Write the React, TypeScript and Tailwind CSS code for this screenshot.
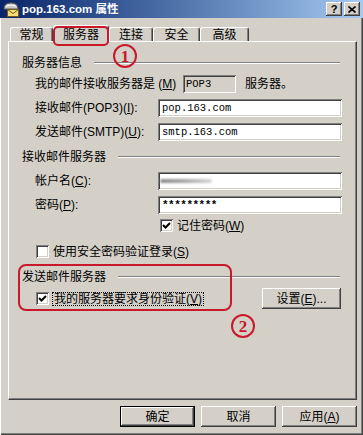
import React from 'react';

// Win2000-style dialog: pop.163.com 属性 / 服务器 tab

function MailIcon() {
  return (
    <svg width="16" height="16" viewBox="0 0 16 16">
      <path d="M1 8 Q1 2 8 2 Q15 2 15 8 Z" fill="#c8c8c8" stroke="#5a5a5a" strokeWidth="1" />
      <path d="M3 5 Q8 3 13 5" fill="none" stroke="#ffffff" strokeWidth="1" />
      <rect x="4.5" y="8.5" width="11" height="7" fill="#f6dc78" stroke="#7a5a10" strokeWidth="1" />
      <path d="M4.5 8.5 L10 12.5 L15.5 8.5" fill="none" stroke="#7a5a10" strokeWidth="1" />
    </svg>
  );
}

function CapButton({ children }: { children: React.ReactNode }) {
  return (
    <div className="w-[16px] h-[14px] bg-[#d4d0c8] flex items-center justify-center shadow-[inset_-1px_-1px_#404040,inset_1px_1px_#ffffff,inset_-2px_-2px_#808080,inset_2px_2px_#d4d0c8]">
      {children}
    </div>
  );
}

function GroupTitle({ children }: { children: React.ReactNode }) {
  return (
    <div className="h-[12px] flex items-center">
      <span className="whitespace-nowrap">{children}</span>
      <div className="flex-1 ml-[12px] mr-[2px] h-[2px] border-t border-t-[#808080] border-b border-b-white" />
    </div>
  );
}

function TextBox({ children }: { children?: React.ReactNode }) {
  return (
    <div className="flex-1 h-[18px] bg-white flex items-center pl-[4px] font-['Liberation_Mono',monospace] text-[10.5px] shadow-[inset_1px_1px_#808080,inset_-1px_-1px_#ffffff,inset_2px_2px_#404040,inset_-2px_-2px_#d4d0c8]">
      {children}
    </div>
  );
}

function CheckBox({ checked }: { checked?: boolean }) {
  return (
    <div className="w-[13px] h-[13px] shrink-0 bg-white flex items-center justify-center shadow-[inset_1px_1px_#808080,inset_-1px_-1px_#ffffff,inset_2px_2px_#404040,inset_-2px_-2px_#d4d0c8]">
      {checked && (
        <svg width="9" height="9" viewBox="0 0 9 9">
          <path d="M1 4 L3.5 6.5 L8 2" fill="none" stroke="#000" strokeWidth="2" />
        </svg>
      )}
    </div>
  );
}

function Tab({ w, children }: { w: string; children: React.ReactNode }) {
  return (
    <div
      className={
        w +
        ' h-[14px] flex items-center justify-center border-t border-l border-white border-r border-r-[#404040] rounded-t-[3px] shadow-[inset_-1px_0_#808080]'
      }
    >
      {children}
    </div>
  );
}

function Circled({ n }: { n: string }) {
  return (
    <div className="w-[24px] h-[24px] rounded-full border-2 border-[#c8182c] flex items-center justify-center text-[#c8182c] font-['Liberation_Serif',serif] font-bold text-[17px] leading-none">
      {n}
    </div>
  );
}

export default function App() {
  return (
    <div className="relative w-[363px] h-[435px] bg-[#d4d0c8] flex flex-col overflow-hidden text-black text-[12px] leading-[12px] font-['Liberation_Sans','Noto_Sans_CJK_SC',sans-serif] shadow-[inset_1px_0_#ffffff,inset_-1px_-1px_#404040,inset_-2px_-2px_#808080]">
      {/* title bar */}
      <div className="h-[18px] shrink-0 flex items-center pl-[3px] pr-[3px] bg-gradient-to-r from-[#0a246a] to-[#a6caf0]">
        <MailIcon />
        <span className="ml-[3px] text-white font-bold text-[11.5px]">pop.163.com 属性</span>
        <div className="ml-auto flex gap-[2px]">
          <CapButton>
            <span className="font-bold text-[11px] leading-none">?</span>
          </CapButton>
          <CapButton>
            <svg width="8" height="7" viewBox="0 0 8 7">
              <path d="M0.5 0.5 L7.5 6.5 M7.5 0.5 L0.5 6.5" stroke="#000" strokeWidth="1.6" />
            </svg>
          </CapButton>
        </div>
      </div>

      {/* tabs */}
      <div className="mt-[7px] ml-[10px] h-[16px] flex items-end">
        <Tab w="w-[43px]">常规</Tab>
        <div className="relative z-10 w-[56px] h-[17px] -mb-[1px] bg-[#d4d0c8] flex items-start justify-center pt-[3px] border-t border-l border-white border-r border-r-[#404040] rounded-t-[3px] shadow-[inset_-1px_0_#808080]">
          服务器
        </div>
        <Tab w="w-[44px]">连接</Tab>
        <Tab w="w-[47px]">安全</Tab>
        <Tab w="w-[49px]">高级</Tab>
      </div>

      {/* panel */}
      <div className="ml-[8px] w-[349px] h-[359px] shrink-0 flex flex-col pl-[13px] pr-[14px] border-t border-l border-white border-r border-b border-r-[#404040] border-b-[#404040] shadow-[inset_-1px_-1px_#808080]">
        <div className="mt-[15px]">
          <GroupTitle>服务器信息</GroupTitle>
        </div>

        <div className="mt-[6px] h-[18px] flex items-center pl-[13px]">
          <span className="w-[148px] whitespace-nowrap">
            我的邮件接收服务器是 (<u>M</u>)
          </span>
          <div className="w-[53px] h-[18px] flex items-center pl-[3px] font-['Liberation_Mono',monospace] text-[10.5px] shadow-[inset_1px_1px_#808080,inset_-1px_-1px_#ffffff,inset_2px_2px_#404040,inset_-2px_-2px_#d4d0c8]">
            POP3
          </div>
          <span className="ml-[9px]">服务器。</span>
        </div>

        <div className="mt-[6px] h-[18px] flex items-center pl-[13px]">
          <span className="w-[123px] whitespace-nowrap">
            接收邮件(POP3)(<u>I</u>):
          </span>
          <TextBox>pop.163.com</TextBox>
        </div>

        <div className="mt-[6px] h-[18px] flex items-center pl-[13px]">
          <span className="w-[123px] whitespace-nowrap">
            发送邮件(SMTP)(<u>U</u>):
          </span>
          <TextBox>smtp.163.com</TextBox>
        </div>

        <div className="mt-[10px]">
          <GroupTitle>接收邮件服务器</GroupTitle>
        </div>

        <div className="mt-[9px] h-[18px] flex items-center pl-[13px]">
          <span className="w-[123px] whitespace-nowrap">
            帐户名(<u>C</u>):
          </span>
          <TextBox>
            <div className="ml-[-2px] h-[4px] w-[52px] rounded-full bg-gradient-to-r from-[#8c8c8c] via-[#a8a8a8] to-[#d8d8d8] blur-[1px]" />
          </TextBox>
        </div>

        <div className="mt-[6px] h-[18px] flex items-center pl-[13px]">
          <span className="w-[123px] whitespace-nowrap">
            密码(<u>P</u>):
          </span>
          <TextBox>
            <span className="font-bold text-[11px] tracking-[-0.5px]">*********</span>
          </TextBox>
        </div>

        <div className="mt-[5px] h-[13px] flex items-center pl-[138px] gap-[4px]">
          <CheckBox checked />
          <span className="whitespace-nowrap">
            记住密码(<u>W</u>)
          </span>
        </div>

        <div className="mt-[13px] h-[13px] flex items-center pl-[14px] gap-[4px]">
          <CheckBox />
          <span className="whitespace-nowrap">
            使用安全密码验证登录(<u>S</u>)
          </span>
        </div>

        <div className="mt-[13px]">
          <GroupTitle>发送邮件服务器</GroupTitle>
        </div>

        <div className="mt-[5px] h-[21px] flex items-center pl-[14px]">
          <CheckBox checked />
          <span className="ml-[3px] h-[14px] flex items-center px-[1px] border border-dotted border-black whitespace-nowrap">
            我的服务器要求身份验证(<u>V</u>)
          </span>
          <button className="ml-auto mr-[1px] w-[79px] h-[21px] bg-[#d4d0c8] flex items-center justify-center shadow-[inset_-1px_-1px_#404040,inset_1px_1px_#ffffff,inset_-2px_-2px_#808080,inset_2px_2px_#d4d0c8]">
            设置(<u>E</u>)...
          </button>
        </div>
      </div>

      {/* dialog buttons */}
      <div className="mt-[6px] pr-[6px] flex justify-end gap-[6px]">
        <button className="w-[75px] h-[21px] bg-[#d4d0c8] border border-black flex items-center justify-center shadow-[inset_-1px_-1px_#404040,inset_1px_1px_#ffffff,inset_-2px_-2px_#808080]">
          确定
        </button>
        <button className="w-[75px] h-[21px] bg-[#d4d0c8] flex items-center justify-center shadow-[inset_-1px_-1px_#404040,inset_1px_1px_#ffffff,inset_-2px_-2px_#808080,inset_2px_2px_#d4d0c8]">
          取消
        </button>
        <button className="w-[75px] h-[21px] bg-[#d4d0c8] flex items-center justify-center shadow-[inset_-1px_-1px_#404040,inset_1px_1px_#ffffff,inset_-2px_-2px_#808080,inset_2px_2px_#d4d0c8]">
          应用(<u>A</u>)
        </button>
      </div>

      {/* red annotations over the dialog */}
      <div className="absolute left-[53px] top-[26px] w-[56px] h-[20px] rounded-[5px] border-2 border-[#c8182c] z-20" />
      <div className="absolute left-[18px] top-[264px] w-[214px] h-[47px] rounded-[8px] border-2 border-[#c8182c]" />
      <div className="absolute left-[113px] top-[44px] z-20">
        <Circled n="1" />
      </div>
      <div className="absolute left-[231px] top-[314px]">
        <Circled n="2" />
      </div>
    </div>
  );
}
